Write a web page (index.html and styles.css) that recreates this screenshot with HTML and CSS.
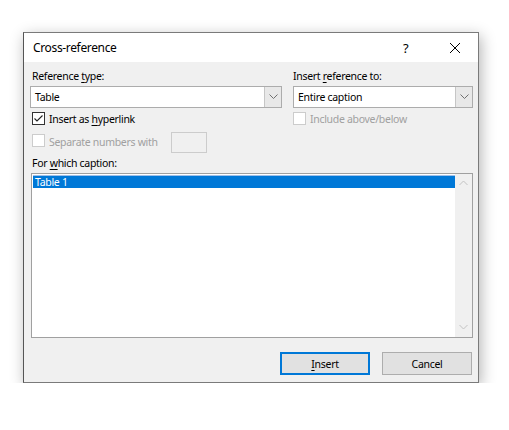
FILE: index.html
```html
<!DOCTYPE html>
<html>
<head>
<meta charset="utf-8">
<link rel="stylesheet" href="styles.css">
</head>
<body>
<div class="dialog">
  <div class="titlebar">
    <span class="title">Cross-reference</span>
    <span class="help">?</span>
    <span class="close">
      <svg width="12" height="12" viewBox="0 0 12 12"><path d="M1 1L11 11M11 1L1 11" stroke="#000" stroke-width="1" fill="none"/></svg>
    </span>
  </div>
  <div class="content">
    <div class="top">
      <div class="col left">
        <div class="label">Reference <u>t</u>ype:</div>
        <div class="combo">
          <span class="value">Table</span>
          <span class="drop"><svg width="9" height="6" viewBox="0 0 9 6"><path d="M0.5 0.5L4.5 4.5L8.5 0.5" stroke="#707070" fill="none"/></svg></span>
        </div>
        <div class="check-row">
          <span class="box checked"><svg width="11" height="11" viewBox="0 0 11 11"><path d="M1.5 5.5L4 8L9.5 2.5" stroke="#222" stroke-width="1.1" fill="none"/></svg></span>
          <span class="ctext">Insert as <u>h</u>yperlink</span>
        </div>
        <div class="check-row second">
          <span class="box disabled"></span>
          <span class="ctext disabled-text">Separate numbers with</span>
          <span class="smallinput"></span>
        </div>
      </div>
      <div class="col right">
        <div class="label">Insert <u>r</u>eference to:</div>
        <div class="combo">
          <span class="value">Entire caption</span>
          <span class="drop"><svg width="9" height="6" viewBox="0 0 9 6"><path d="M0.5 0.5L4.5 4.5L8.5 0.5" stroke="#707070" fill="none"/></svg></span>
        </div>
        <div class="check-row">
          <span class="box disabled"></span>
          <span class="ctext disabled-text">Include above/below</span>
        </div>
      </div>
    </div>
    <div class="label caption-label">For <u>w</u>hich caption:</div>
    <div class="listbox">
      <div class="items">
        <div class="item selected">Table 1</div>
      </div>
      <div class="scrollbar">
        <svg width="9" height="6" viewBox="0 0 9 6"><path d="M0.5 5L4.5 1L8.5 5" stroke="#c2c2c2" fill="none"/></svg>
        <svg width="9" height="6" viewBox="0 0 9 6"><path d="M0.5 1L4.5 5L8.5 1" stroke="#c2c2c2" fill="none"/></svg>
      </div>
    </div>
    <div class="buttons">
      <div class="btn default"><u>I</u>nsert</div>
      <div class="btn">Cancel</div>
    </div>
  </div>
</div>
</body>
</html>
```

FILE: styles.css
```css
html, body {
  margin: 0;
  background: #ffffff;
}
body {
  padding: 32px 0 0 23px;
  font-family: "Noto Sans", "Segoe UI", sans-serif;
  font-size: 10.5px;
  letter-spacing: -0.3px;
  color: #000;
}
.dialog {
  width: 454px;
  height: 349px;
  border: 1px solid #7a7a7a;
  border-left-color: #555555;
  background: #f0f0f0;
  box-shadow: 2px 4px 14px rgba(0, 0, 0, 0.3);
  display: flex;
  flex-direction: column;
}
.titlebar {
  height: 29px;
  background: #ffffff;
  display: flex;
  align-items: center;
  padding-left: 9px;
}
.title {
  font-size: 12px;
  letter-spacing: -0.35px;
  flex: 1;
}
.help {
  font-size: 13px;
  width: 10px;
  margin-right: 36px;
}
.close {
  width: 12px;
  margin-right: 17px;
  display: flex;
}
.content {
  padding: 7px 4px 0 6px;
  display: flex;
  flex-direction: column;
}
.top {
  display: flex;
  gap: 11px;
}
.col.left { width: 252px; }
.col.right { width: 180px; }
.label {
  line-height: 14px;
  height: 14px;
  padding-left: 2px;
  white-space: nowrap;
}
.col.right .label { padding-left: 0; }
.label u, .ctext u, .btn u { text-decoration-thickness: 1px; text-underline-offset: 2px; }
.combo {
  margin-top: 3px;
  height: 20px;
  border: 1px solid #acacac;
  background: #ffffff;
  display: flex;
  align-items: stretch;
}
.combo .value {
  flex: 1;
  line-height: 20px;
  padding-left: 4px;
}
.drop {
  width: 16px;
  background: #e8e8e8;
  border-left: 1px solid #c6c6c6;
  display: flex;
  align-items: center;
  justify-content: center;
}
.check-row {
  margin-top: 4px;
  height: 13px;
  display: flex;
  align-items: center;
}
.check-row.second {
  margin-top: 7px;
  height: 20px;
  align-items: center;
}
.box {
  width: 11px;
  height: 11px;
  border: 1px solid #333333;
  background: #ffffff;
  margin-left: 0;
  display: flex;
  align-items: center;
  justify-content: center;
  flex: none;
}
.col.left .box { margin-left: 2px; }
.box.disabled {
  border-color: #cccccc;
}
.check-row.second .box { margin-top: -3px; }
.ctext {
  margin-left: 4px;
  white-space: nowrap;
}
.disabled-text { color: #a0a0a0; }
.smallinput {
  width: 34px;
  height: 19px;
  border: 1px solid #cccccc;
  background: #f0f0f0;
  margin-left: 13px;
}
.caption-label {
  margin-top: 4px;
}
.listbox {
  margin-top: 3px;
  margin-left: 1px;
  height: 163px;
  width: 440px;
  border: 1px solid #a0a0a0;
  background: #ffffff;
  display: flex;
}
.items {
  flex: 1;
  padding: 1px 0 0 1px;
}
.item {
  height: 12px;
  line-height: 12px;
  padding-left: 2px;
  border-top: 1px solid #a0c0e8;
}
.item.selected {
  background: #0078d7;
  color: #ffffff;
}
.scrollbar {
  width: 17px;
  background: #f0f0f0;
  display: flex;
  flex-direction: column;
  align-items: center;
  justify-content: space-between;
  padding: 6px 0 7px;
  box-sizing: border-box;
}
.buttons {
  margin-top: 14px;
  display: flex;
  justify-content: flex-end;
  gap: 12px;
  width: 442px;
}
.btn {
  width: 88px;
  height: 21px;
  border: 1px solid #adadad;
  background: #e1e1e1;
  display: flex;
  align-items: center;
  justify-content: center;
}
.btn.default {
  border: 2px solid #0078d7;
  width: 86px;
  height: 19px;
}
```
